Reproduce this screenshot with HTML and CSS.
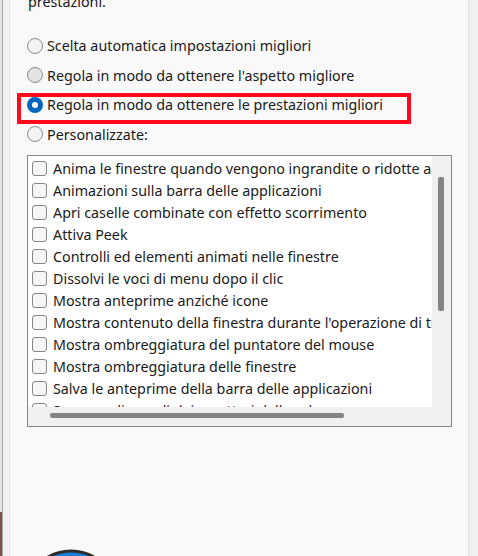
FILE: index.html
```html
<!DOCTYPE html>
<html lang="it">
<head>
<meta charset="utf-8">
<title>Opzioni prestazioni</title>
<link rel="stylesheet" href="styles.css">
</head>
<body>
<div class="screen">
  <div class="edge-left">
    <div class="edge-desk"><span class="edge-bottom"></span></div>
    <div class="edge-line"></div>
    <div class="edge-pane"></div>
  </div>
  <div class="dialog">
    <p class="intro">prestazioni.</p>
    <div class="radios">
      <label class="radio-row"><span class="radio"></span><span>Scelta automatica impostazioni migliori</span></label>
      <label class="radio-row"><span class="radio hover"></span><span>Regola in modo da ottenere l'aspetto migliore</span></label>
      <label class="radio-row"><span class="radio checked"></span><span>Regola in modo da ottenere le prestazioni migliori</span></label>
      <label class="radio-row"><span class="radio"></span><span>Personalizzate:</span></label>
    </div>
    <div class="highlight"></div>
    <div class="listbox">
      <div class="items">
        <div class="item"><span class="check"></span><span>Anima le finestre quando vengono ingrandite o ridotte ad icona</span></div>
        <div class="item"><span class="check"></span><span>Animazioni sulla barra delle applicazioni</span></div>
        <div class="item"><span class="check"></span><span>Apri caselle combinate con effetto scorrimento</span></div>
        <div class="item"><span class="check"></span><span>Attiva Peek</span></div>
        <div class="item"><span class="check"></span><span>Controlli ed elementi animati nelle finestre</span></div>
        <div class="item"><span class="check"></span><span>Dissolvi le voci di menu dopo il clic</span></div>
        <div class="item"><span class="check"></span><span>Mostra anteprime anziché icone</span></div>
        <div class="item"><span class="check"></span><span>Mostra contenuto della finestra durante l'operazione di trascinamento</span></div>
        <div class="item"><span class="check"></span><span>Mostra ombreggiatura del puntatore del mouse</span></div>
        <div class="item"><span class="check"></span><span>Mostra ombreggiatura delle finestre</span></div>
        <div class="item"><span class="check"></span><span>Salva le anteprime della barra delle applicazioni</span></div>
        <div class="item"><span class="check"></span><span>Smussa gli angoli dei caratteri dello schermo</span></div>
      </div>
      <div class="vscroll"><span class="vthumb"></span></div>
      <div class="hscroll"><span class="hthumb"></span></div>
      <div class="corner"></div>
    </div>
    <div class="badge">
      <svg width="96" height="96" viewBox="0 0 96 96"><circle cx="48" cy="48" r="46" fill="#1a7fd4" stroke="#2b2b2b" stroke-width="3"/></svg>
    </div>
  </div>
  <div class="edge-right"></div>
</div>
</body>
</html>
```
FILE: styles.css
```css
html, body {
  margin: 0;
  padding: 0;
}
body {
  width: 478px;
  height: 556px;
  overflow: hidden;
  font-family: "Noto Sans", "Open Sans", sans-serif;
  font-size: 14.3px;
  color: #1a1a1a;
}
.screen {
  display: flex;
  width: 478px;
  height: 556px;
  overflow: hidden;
}
.edge-left {
  width: 10px;
  display: flex;
  flex-shrink: 0;
}
.edge-desk {
  width: 2px;
  background: #e4e4e4;
  display: flex;
  flex-direction: column;
  justify-content: flex-end;
}
.edge-bottom {
  height: 44px;
  background: #7d5249;
}
.edge-line {
  width: 1px;
  background: #a8a8a8;
}
.edge-pane {
  flex: 1;
  background: #f1f1f1;
  border-right: 1px solid #e6e6e6;
}
.dialog {
  flex: 1;
  background: #f9f9f9;
  padding-left: 17px;
  position: relative;
  overflow: hidden;
}
.edge-right {
  width: 9px;
  flex-shrink: 0;
  background: #f0f0f0;
  border-left: 1px solid #e4e4e4;
}
.intro {
  margin: -8px 0 0 1px;
  line-height: 20px;
  height: 20px;
}
.radios {
  margin-top: 19px;
  display: flex;
  flex-direction: column;
}
.radio-row {
  height: 29.5px;
  display: flex;
  align-items: center;
  gap: 4px;
  white-space: nowrap;
}
.radio {
  width: 16px;
  height: 16px;
  box-sizing: border-box;
  border-radius: 50%;
  border: 1px solid #8b8b8b;
  background: #f3f3f3;
  flex-shrink: 0;
}
.radio.hover {
  background: #e4e4e4;
}
.radio.checked {
  border: 5px solid #0067c0;
  background: #ffffff;
}
.highlight {
  position: absolute;
  left: 7px;
  top: 93px;
  width: 394px;
  height: 31px;
  box-sizing: border-box;
  border: 4px solid #ff0a1c;
}
.listbox {
  margin-top: 6px;
  width: 425px;
  height: 272px;
  box-sizing: border-box;
  border: 1px solid #858585;
  background: #ffffff;
  display: grid;
  grid-template-columns: 1fr 19px;
  grid-template-rows: 1fr 19px;
}
.items {
  overflow: hidden;
  padding-top: 1px;
}
.item {
  height: 22px;
  display: flex;
  align-items: center;
  gap: 6px;
  padding-left: 4px;
  white-space: nowrap;
}
.check {
  width: 15px;
  height: 15px;
  box-sizing: border-box;
  border: 1px solid #868686;
  border-radius: 3px;
  background: #f6f6f6;
  flex-shrink: 0;
}
.vscroll {
  background: #f0f0f0;
  padding: 21px 0 0 6px;
}
.vthumb {
  display: block;
  width: 6px;
  height: 134px;
  background: #858585;
  border-radius: 2px;
}
.hscroll {
  background: #f0f0f0;
  padding: 6px 0 0 22px;
}
.hthumb {
  display: block;
  width: 294px;
  height: 5px;
  background: #858585;
  border-radius: 2px;
}
.corner {
  background: #f0f0f0;
}
.badge {
  margin: 122px 0 0 -4px;
  width: 96px;
  height: 96px;
}
.badge svg {
  display: block;
}
```
